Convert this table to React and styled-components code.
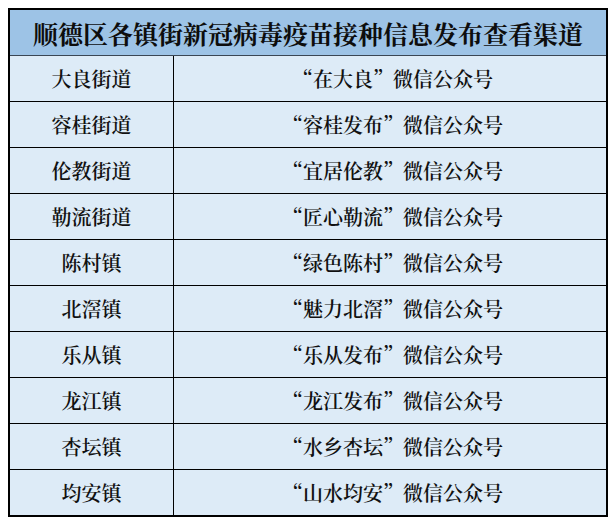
import React from 'react';
import styled, { createGlobalStyle } from 'styled-components';

const GlobalStyle = createGlobalStyle`
  body {
    margin: 8px;
    background: #ffffff;
    font-family: "Noto Serif CJK SC", "Noto Sans CJK SC", serif;
  }
`;

const Table = styled.div`
  width: 600px;
  box-sizing: border-box;
  border: 2px solid #000000;
  display: grid;
  grid-template-columns: 164px 1fr;
  background: #ddebf7;
  color: #111111;
`;

const Title = styled.div`
  grid-column: 1 / -1;
  height: 45px;
  display: flex;
  align-items: center;
  justify-content: center;
  background: #9dc3e6;
  border-bottom: 1px solid #3a4654;
  font-size: 25px;
  font-weight: 700;
  letter-spacing: 0;
  color: #0d0d0d;
`;

const Cell = styled.div`
  height: 45px;
  display: flex;
  align-items: center;
  justify-content: center;
  font-size: 20px;
  font-weight: 600;
  border-bottom: ${({ $last }) => ($last ? 'none' : '1px solid #000000')};
  border-right: ${({ $first }) => ($first ? '1px solid #000000' : 'none')};
  padding-left: ${({ $first }) => ($first ? '0' : '6px')};
`;

const rows = [
  { town: '大良街道', channel: '在大良' },
  { town: '容桂街道', channel: '容桂发布' },
  { town: '伦教街道', channel: '宜居伦教' },
  { town: '勒流街道', channel: '匠心勒流' },
  { town: '陈村镇', channel: '绿色陈村' },
  { town: '北滘镇', channel: '魅力北滘' },
  { town: '乐从镇', channel: '乐从发布' },
  { town: '龙江镇', channel: '龙江发布' },
  { town: '杏坛镇', channel: '水乡杏坛' },
  { town: '均安镇', channel: '山水均安' }
];

const App = () => {
  return (
    <>
      <GlobalStyle />
      <Table>
        <Title>顺德区各镇街新冠病毒疫苗接种信息发布查看渠道</Title>
        {rows.map((row, idx) => {
          const last = idx === rows.length - 1;
          return (
            <React.Fragment key={row.town}>
              <Cell $first $last={last}>{row.town}</Cell>
              <Cell $last={last}>“{row.channel}”微信公众号</Cell>
            </React.Fragment>
          );
        })}
      </Table>
    </>
  );
};

export default App;
